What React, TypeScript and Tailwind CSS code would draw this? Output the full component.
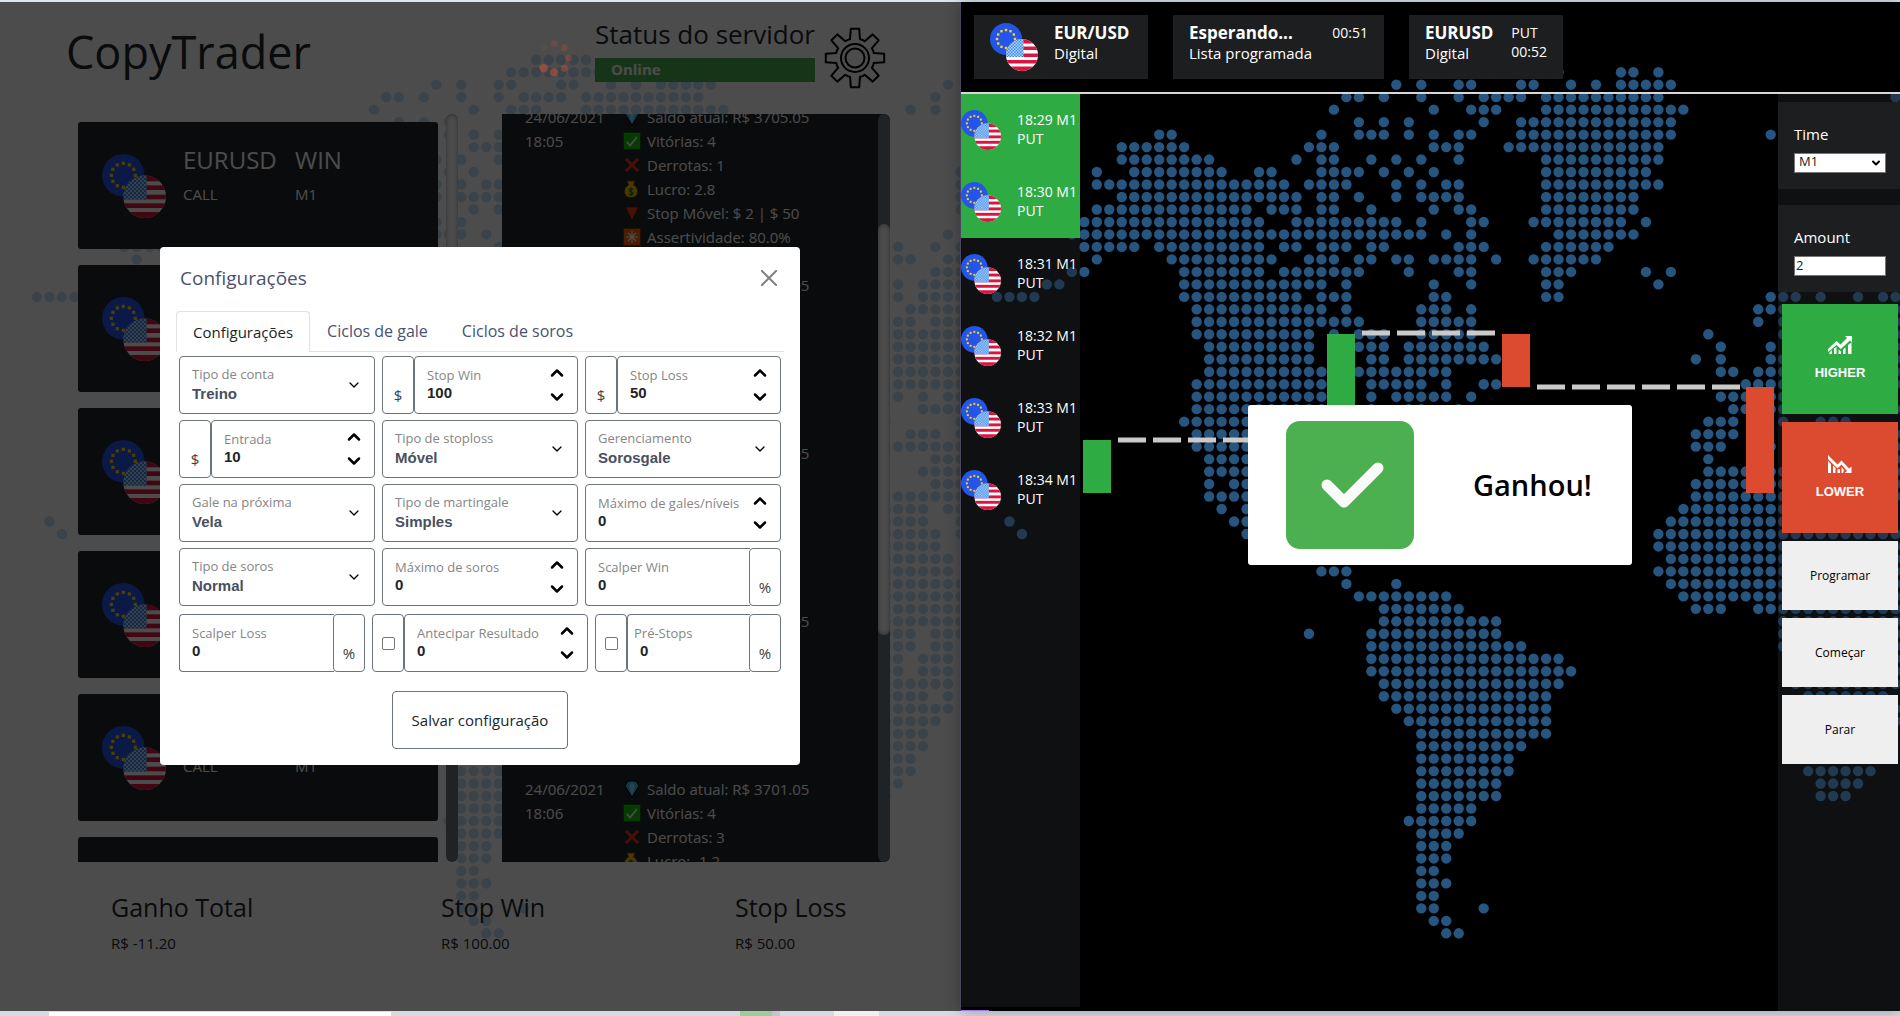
import { useState, type ReactNode } from "react";
import { ChevronDown, ChevronUp } from "lucide-react";

/* Occupied columns of the dotted world map, one entry per row starting at row 4. */
const MAP_ROWS = [
  "42-46",
  "40-47,52-53,55",
  "34,36,39-40,44-45,48,50,52-56,75",
  "30-31,33,36,39,41-44,46-55,74",
  "29,37,40-42,46-57,72,74",
  "31,33,35,41,44-56",
  "15-16,28,31-33,35,37,39-40,44-56,64",
  "12-17,27-29,37-39,43-55",
  "12-19,26,28-29,32,34,36,39,46-55",
  "10,13-20,23-24,28-31,33,35,37,46-54,76",
  "10-25,27-30,34,36,38-39,46-55,76",
  "12-26,28-29,31,34,36-39,46-53,76",
  "10-22,24-26,28-29,32,37,39-40,46-53,76",
  "9-23,26-34,36,40-41,45-52,54",
  "8-36,38,40,47-53,75",
  "9-13,15-23,25-26,28-30,32-33,39-41,46-51,71,74,76",
  "10,16-24,27-29,31-32,34-35,37-40,42,45-50,71-72,75-76",
  "8-9,17-23,25-31,35,39-40,46-48,54,56,74-76",
  "6-7,17-28,30,37,40,46-47,55,71,73-76",
  "2-5,17-26,28-30,37-38,46-47,64-66,68,71,73-76",
  "18-28,30,36-38,40,63-65,72-76",
  "18-31,36-40,63,65,71-72,74-76",
  "18-27,29,31-33,36-40,59,65,71-76",
  "19-27,31-33,35-41,60,64,71-76",
  "19-27,32-33,35-42,58,60,64-65,71-76",
  "19-28,31-38,60-61,63-65,71-76",
  "18-28,32-36,38,41-42,62-65,71-76",
  "18-28,32,34-38,40,60-65,71,73,75-76",
  "18-28,32,35-36,39,61-65,73-76",
  "17-28,59-61,65,68-70,76",
  "18-28,58-61,72-74,76",
  "18-28,58-60,64,71-76",
  "19-28,59,74-76",
  "19-28,59-65,73-76",
  "19,21-28,58-65,74-76",
  "19-28,58-65,71-76",
  "20,22-28,57-73,75-76",
  "3,21-28,56-73,76",
  "4,22-28,55-74,76",
  "24-30,55-74",
  "26-30,56-75",
  "28-30,55-75",
  "30,34,56-76",
  "31-38,57-76",
  "33-39,58-60,63-76",
  "33-42,65-76",
  "27,32-42,65-72,74-76",
  "32-44,65-72,74-75",
  "32-47,66-71,73-75",
  "32-48,66-71,73-75",
  "33-47,66-75",
  "33-46,67-73,75",
  "34-46,67-75",
  "35-46,67-74",
  "36-46,67-73",
  "36-44,67-73",
  "36-43,67-72",
  "36-43,67-72",
  "36-42,68-71",
  "36-42,68-70",
  "36-40",
  "35-40",
  "36-39",
  "36-38",
  "36-38",
  "36-37",
  "36-38",
  "36-37",
  "36-37,41",
  "37-38",
  "38-39",
];

const PITCH = 12.48;

const DOTS = MAP_ROWS.flatMap((row, i) =>
  row.split(",").flatMap((part) => {
    const [from, to = from] = part.split("-").map(Number);
    return Array.from({ length: to - from + 1 }, (_, k) => ({
      x: 12 + PITCH * (from + k),
      y: 9.8 + PITCH * (i + 4),
    }));
  }),
);

function WorldMap({ className, shift }: { className: string; shift: number }) {
  return (
    <svg
      className={`pointer-events-none absolute top-0 left-0 h-[1010px] w-[960px] ${className}`}
      viewBox={`${shift} 2 960 1010`}
      fill="currentColor"
      aria-hidden="true"
    >
      {DOTS.map((d) => (
        <circle key={`${d.x}-${d.y}`} cx={d.x} cy={d.y} r={5.2} />
      ))}
    </svg>
  );
}

function PairIcon({ className }: { className: string }) {
  return (
    <svg className={`shrink-0 ${className}`} viewBox="0 0 96 96" aria-hidden="true">
      <defs>
        <clipPath id="us-clip">
          <circle cx="64" cy="64" r="32" />
        </clipPath>
        <pattern id="us-stars" width="6" height="6" patternUnits="userSpaceOnUse">
          <rect width="6" height="6" fill="#3a8cf0" />
          <rect width="3" height="3" fill="#b9d6fa" />
          <rect x="3" y="3" width="3" height="3" fill="#b9d6fa" />
        </pattern>
      </defs>
      <circle cx="32" cy="32" r="32" fill="#2355ea" />
      {Array.from({ length: 12 }, (_, i) => {
        const a = (i * Math.PI) / 6;
        return (
          <rect
            key={i}
            x={32 + 18 * Math.sin(a) - 2.4}
            y={32 - 18 * Math.cos(a) - 2.4}
            width="4.8"
            height="4.8"
            fill="#ffd21a"
          />
        );
      })}
      <g clipPath="url(#us-clip)">
        <rect x="32" y="32" width="64" height="64" fill="#fff" />
        {[32, 47, 61, 74, 87].map((y, i) => (
          <rect key={y} x="32" y={y} width="64" height={i === 0 || i === 4 ? 9 : 7} fill="#dc143f" />
        ))}
        <rect x="32" y="32" width="35" height="36" fill="url(#us-stars)" />
      </g>
    </svg>
  );
}

const TEETH = Array.from({ length: 8 }, (_, i) => {
  const a = (i * Math.PI) / 4;
  return [
    [-5, -18.7],
    [-4.2, -29.2],
    [4.2, -29.2],
    [5, -18.7],
  ]
    .map(([x, y]) => `${(x * Math.cos(a) - y * Math.sin(a)).toFixed(2)},${(x * Math.sin(a) + y * Math.cos(a)).toFixed(2)}`)
    .join(" ");
});

/* Between two teeth the outline dips slightly towards the hub. */
const VALLEYS = Array.from({ length: 8 }, (_, i) => {
  const a = ((i + 0.5) * Math.PI) / 4;
  return `${(19.6 * Math.sin(a)).toFixed(2)},${(-19.6 * Math.cos(a)).toFixed(2)}`;
});

const GEAR_POINTS = TEETH.map((t, i) => `${t} ${VALLEYS[i]}`).join(" ");

function GearIcon() {
  return (
    <svg className="size-[62px]" viewBox="-31 -31 62 62" fill="none" stroke="#000" strokeWidth="2" strokeLinejoin="round" aria-hidden="true">
      <polygon points={GEAR_POINTS} />
      <circle r="14" />
      <circle r="9.5" />
    </svg>
  );
}

function LoadingDots() {
  const alpha = [0.35, 0.5, 0.6, 0.75, 0.9, 1, 0.04, 0.2];
  return (
    <svg className="relative z-10 size-9 opacity-50" viewBox="-18 -18 36 36" fill="#d9503a" aria-hidden="true">
      {alpha.map((o, i) => {
        const a = (i * Math.PI) / 4;
        return <circle key={i} cx={14.5 * Math.sin(a)} cy={-14.5 * Math.cos(a)} r={i > 3 && i < 6 ? 4.2 : 3.5} opacity={o} />;
      })}
    </svg>
  );
}

type Glyph = "gem" | "check" | "cross" | "bag" | "down" | "burst";

function LogIcon({ kind }: { kind: Glyph }) {
  return (
    <svg className="size-[18px] shrink-0" viewBox="0 0 18 18" aria-hidden="true">
      {kind === "gem" && (
        <>
          <path d="M5 1h8l3 5-7 11L2 6z" fill="#3db9ee" stroke="#000" />
          <path d="M9 2l3 4-3 10-3-10z" fill="#8fdcff" />
        </>
      )}
      {kind === "check" && (
        <>
          <rect x=".5" y=".5" width="17" height="17" fill="#16c60c" stroke="#0a5c05" />
          <path d="M4 10l3 3.5L14 5" fill="none" stroke="#fff" strokeWidth="1.6" />
        </>
      )}
      {kind === "cross" && <path d="M3 3l12 12M15 3L3 15" stroke="#f03a17" strokeWidth="3" />}
      {kind === "bag" && (
        <>
          <path d="M4 1h8l-1.500 4C14 7 14.500 9.500 14.500 11.500 14.500 15.500 12 17.500 8 17.500S1.500 15.500 1.500 11.500C1.500 9.500 2 7 5.500 5z" fill="#fcbf00" stroke="#5a4300" />
          <path d="M10 9.500C9 8.300 6 8.500 6 10.200s4 1.200 4 3-3 2-4.200.6M8 7.500v8.500" fill="none" stroke="#107c10" strokeWidth="1.300" />
        </>
      )}
      {kind === "down" && <path d="M2 3h14L9 16z" fill="#f03a17" stroke="#50120a" />}
      {kind === "burst" && (
        <>
          <rect x=".5" y=".5" width="17" height="17" fill="#f7630c" stroke="#7a2f05" />
          <path d="M9 3v12M3 9h12M5 5l8 8M13 5l-8 8" stroke="#fff" strokeWidth="1.100" />
        </>
      )}
    </svg>
  );
}

function Scrollbar({ thumb }: { thumb: string }) {
  return (
    <div className="flex w-3 shrink-0 flex-col overflow-hidden rounded-md bg-[#6c757d]">
      <div className={`rounded-md bg-white shadow-[inset_0_0_5px_#999] ${thumb}`} />
    </div>
  );
}

function OperationCard() {
  return (
    <li className="flex h-[127px] shrink-0 items-center gap-[17px] rounded-[3px] bg-[#212529] pl-6 text-white">
      <PairIcon className="size-16" />
      <div className="grid grid-cols-[112px_1fr] items-center pb-5">
        <span className="text-2xl leading-9">EURUSD</span>
        <span className="text-2xl leading-9">WIN</span>
        <span className="text-[15px] leading-8">CALL</span>
        <span className="text-[15px] leading-8">M1</span>
      </div>
    </li>
  );
}

type Report = { time: string; balance: string; wins: number; losses: number; profit: string; stop: string; rate: string };

const REPORTS: Report[] = [
  { time: "18:05", balance: "3705.05", wins: 4, losses: 1, profit: "2.8", stop: "2 | $ 50", rate: "80.0%" },
  { time: "18:05", balance: "3703.05", wins: 4, losses: 2, profit: "0.8", stop: "2 | $ 50", rate: "66.6%" },
  { time: "18:05", balance: "3703.05", wins: 4, losses: 2, profit: "0.8", stop: "2 | $ 50", rate: "66.6%" },
  { time: "18:06", balance: "3703.05", wins: 4, losses: 2, profit: "0.8", stop: "2 | $ 50", rate: "66.6%" },
  { time: "18:06", balance: "3701.05", wins: 4, losses: 3, profit: "-1.2", stop: "2 | $ 50", rate: "57.1%" },
];

function ReportItem({ r }: { r: Report }) {
  const lines: [Glyph, string][] = [
    ["gem", `Saldo atual: R$ ${r.balance}`],
    ["check", `Vitórias: ${r.wins}`],
    ["cross", `Derrotas: ${r.losses}`],
    ["bag", `Lucro: ${r.profit}`],
    ["down", `Stop Móvel: $ ${r.stop}`],
    ["burst", `Assertividade: ${r.rate}`],
  ];
  return (
    <li className="flex shrink-0 text-[15px] leading-6">
      <div className="w-[98px]">
        24/06/2021
        <br />
        {r.time}
      </div>
      <ul>
        {lines.map(([kind, text]) => (
          <li key={kind} className="flex items-center gap-1.5">
            <LogIcon kind={kind} />
            {text}
          </li>
        ))}
      </ul>
    </li>
  );
}

const BOX = "h-[58px] rounded-[4px] border border-[#6c757d] bg-white";

function Addon({ children, end, center }: { children: ReactNode; end?: boolean; center?: boolean }) {
  return (
    <div
      className={`flex w-8 shrink-0 justify-center text-[15px] text-[#3c4043] ${BOX} ${end ? "-ml-px" : ""} ${center ? "items-center" : "items-end pb-[7px]"}`}
    >
      {children}
    </div>
  );
}

function SelectField({ id, label, value }: { id: string; label: string; value: string }) {
  return (
    <div className={`flex min-w-0 flex-1 items-center pr-3 pl-3 ${BOX}`}>
      <div className="min-w-0 flex-1 pt-px">
        <label htmlFor={id} className="block text-[13px] leading-[18px] whitespace-nowrap text-[#868686]">
          {label}
        </label>
        <select
          id={id}
          className="block h-6 w-full appearance-none bg-transparent font-['Liberation_Sans',sans-serif] text-[15px] font-bold text-[#495060] outline-none"
        >
          <option>{value}</option>
        </select>
      </div>
      <ChevronDown className="pointer-events-none size-4 text-black" strokeWidth={2} aria-hidden="true" />
    </div>
  );
}

type NumberProps = { id: string; label: string; value: number; arrows?: boolean; open?: boolean; indent?: boolean };

function NumberField({ id, label, value, arrows = true, open, indent }: NumberProps) {
  const [n, setN] = useState(value);
  return (
    <div className={`flex min-w-0 flex-1 items-center pr-2 ${indent ? "pl-1.5" : "pl-3"} ${BOX} ${open ? "rounded-r-none border-r-0" : ""}`}>
      <div className="min-w-0 flex-1 pb-[3px]">
        <label htmlFor={id} className="block text-[13px] leading-5 whitespace-nowrap text-[#868686]">
          {label}
        </label>
        <input
          id={id}
          type="text"
          inputMode="numeric"
          value={n}
          onChange={(e) => setN(Number(e.target.value) || 0)}
          className={`block h-[18px] w-full bg-transparent font-['Liberation_Sans',sans-serif] text-[15px] font-bold text-[#212529] outline-none ${indent ? "pl-1.5" : ""}`}
        />
      </div>
      {arrows && (
        <div className="flex flex-col gap-1">
          <button type="button" aria-label={`Aumentar ${label}`} onClick={() => setN(n + 1)}>
            <ChevronUp className="h-5 w-6 text-black" strokeWidth={3} />
          </button>
          <button type="button" aria-label={`Diminuir ${label}`} onClick={() => setN(n - 1)}>
            <ChevronDown className="h-5 w-6 text-black" strokeWidth={3} />
          </button>
        </div>
      )}
    </div>
  );
}

function CheckAddon({ label }: { label: string }) {
  return (
    <Addon center>
      <input
        type="checkbox"
        aria-label={label}
        className="size-[13px] appearance-none rounded-[2px] border border-[#767676] bg-white checked:bg-blue-600"
      />
    </Addon>
  );
}

function SettingsDialog() {
  const tabs = ["Configurações", "Ciclos de gale", "Ciclos de soros"];
  return (
    <div className="absolute inset-x-0 top-[245px] flex justify-center pr-px">
      <div role="dialog" aria-label="Configurações" className="w-[640px] rounded-[4px] bg-white px-4 pb-4 text-[#495272]">
        <div className="flex h-16 items-center justify-between pr-[7px] pb-0.5 pl-1">
          <h2 className="text-[19px]">Configurações</h2>
          <button type="button" aria-label="Fechar" className="text-[#808080]">
            <svg className="size-4" viewBox="0 0 16 16" stroke="currentColor" strokeWidth="2" aria-hidden="true">
              <path d="M0 0l16 16M16 0L0 16" />
            </svg>
          </button>
        </div>
        <div role="tablist" className="flex h-[41px] border-b border-[#dee2e6]">
          {tabs.map((t, i) => (
            <button
              key={t}
              type="button"
              role="tab"
              aria-selected={i === 0}
              className={
                i === 0
                  ? "-mb-px rounded-t-[4px] border border-b-0 border-[#dee2e6] bg-white px-4 text-[15px] text-[#212529]"
                  : "px-[17px] text-base"
              }
            >
              {t}
            </button>
          ))}
        </div>
        <form className="flex flex-col gap-2 px-[3px] pt-1" onSubmit={(e) => e.preventDefault()}>
          <div className="grid grid-cols-3 gap-x-[7px] gap-y-1.5">
            <SelectField id="conta" label="Tipo de conta" value="Treino" />
            <div className="flex">
              <Addon>$</Addon>
              <NumberField id="stopwin" label="Stop Win" value={100} />
            </div>
            <div className="flex">
              <Addon>$</Addon>
              <NumberField id="stoploss" label="Stop Loss" value={50} />
            </div>
            <div className="flex">
              <Addon>$</Addon>
              <NumberField id="entrada" label="Entrada" value={10} />
            </div>
            <SelectField id="tipostop" label="Tipo de stoploss" value="Móvel" />
            <SelectField id="gerenciamento" label="Gerenciamento" value="Sorosgale" />
            <SelectField id="galeproxima" label="Gale na próxima" value="Vela" />
            <SelectField id="martingale" label="Tipo de martingale" value="Simples" />
            <NumberField id="maxgales" label="Máximo de gales/níveis" value={0} />
            <SelectField id="tiposoros" label="Tipo de soros" value="Normal" />
            <NumberField id="maxsoros" label="Máximo de soros" value={0} />
            <div className="flex">
              <NumberField id="scalperwin" label="Scalper Win" value={0} arrows={false} open />
              <Addon end>%</Addon>
            </div>
          </div>
          <div className="grid grid-cols-[186fr_216fr_186fr] gap-[7px]">
            <div className="flex">
              <NumberField id="scalperloss" label="Scalper Loss" value={0} arrows={false} open />
              <Addon end>%</Addon>
            </div>
            <div className="flex">
              <CheckAddon label="Ativar Antecipar Resultado" />
              <NumberField id="antecipar" label="Antecipar Resultado" value={0} />
            </div>
            <div className="flex">
              <CheckAddon label="Ativar Pré-Stops" />
              <NumberField id="prestops" label="Pré-Stops" value={0} arrows={false} open indent />
              <Addon end>%</Addon>
            </div>
          </div>
          <button type="submit" className={`mt-[11px] w-44 self-center text-[15px] text-[#212529] ${BOX}`}>
            Salvar configuração
          </button>
        </form>
      </div>
    </div>
  );
}

function CopyTraderWindow() {
  const totals = [
    ["Ganho Total", "R$ -11.20"],
    ["Stop Win", "R$ 100.00"],
    ["Stop Loss", "R$ 50.00"],
  ];
  return (
    <section className="relative min-w-0 flex-[961] overflow-hidden bg-white text-[#212529]">
      <WorldMap className="text-[#c4dff5]" shift={0} />
      <div className="relative flex h-full flex-col">
        <header className="flex h-28 items-start pl-[66px]">
          <h1 className="w-[470px] pt-[18px] text-[45px] leading-[64px]">CopyTrader</h1>
          <div className="pt-[38px]">
            <LoadingDots />
          </div>
          <div className="ml-[23px] w-[220px] pt-3">
            <p className="text-[26px] leading-10 whitespace-nowrap">Status do servidor</p>
            <p className="mt-1 h-6 bg-[#4caf50] pl-4 text-[15px] leading-[22px] font-bold text-white">Online</p>
          </div>
          <button type="button" aria-label="Abrir configurações" className="mt-[25px] ml-[9px]">
            <GearIcon />
          </button>
        </header>
        <div className="flex h-[748px] shrink-0 pr-[71px] pl-[78px]">
          <ul className="flex w-[360px] flex-col gap-4 overflow-hidden pt-2">
            {Array.from({ length: 6 }, (_, i) => (
              <OperationCard key={i} />
            ))}
          </ul>
          <div className="ml-2 flex">
            <Scrollbar thumb="h-[560px]" />
          </div>
          <div className="ml-11 flex min-w-0 flex-1 overflow-hidden rounded-r-[6px] bg-[#212529] text-white">
            <ul className="-mt-[9px] flex flex-1 flex-col gap-6 overflow-hidden pl-[23px]">
              {REPORTS.map((r, i) => (
                <ReportItem key={i} r={r} />
              ))}
            </ul>
            <div className="flex">
              <Scrollbar thumb="mt-[110px] h-[411px]" />
            </div>
          </div>
        </div>
        <footer className="grid grid-cols-[330fr_294fr_226fr] pt-[27px] pl-[111px]">
          {totals.map(([name, amount]) => (
            <div key={name}>
              <p className="text-[25px] leading-9">{name}</p>
              <p className="text-[15px] leading-9">{amount}</p>
            </div>
          ))}
        </footer>
      </div>
      <div className="absolute inset-0 bg-black/70" />
      <SettingsDialog />
    </section>
  );
}

function TrendIcon({ up }: { up: boolean }) {
  return (
    <svg className="h-5 w-6" viewBox="0 0 24 20" fill="#fff" aria-hidden="true">
      {up ? (
        <>
          <path d="M0 17v-3l8.500-8 4 3.500L19 3l-2-2h7v6.500L22 5.500 12.800 14 8.600 10z" />
          <path d="M1.500 17.500l2.500-2.500v4H1zM6 13.500l2.500-1.500v7H6zM10.500 14.500l2.500 2v2.500h-2.500zM15 14.500l2.500-2v6.500H15zM20 10l3.500-2.500V19H20z" />
        </>
      ) : (
        <>
          <path d="M0 1l9.500 9.500 4-4 7.500 8 2.500-2V19h-7l2.500-2-5.500-6.500-4 4L0 5z" />
          <path d="M0 7l3 3v9H0zM5 11.500l2.500 2.500v5H5zM9.500 15.500l2.500-.5v4H9.500zM13.500 13l2.500 3-1 3h-1.500z" />
        </>
      )}
    </svg>
  );
}

/* Candle positions on the price canvas. */
const CANDLES = [
  { x: 3, y: 346, h: 53, color: "#2eac43" },
  { x: 247, y: 240, h: 106, color: "#2eac43" },
  { x: 422, y: 240, h: 53, color: "#dc4a30" },
  { x: 666, y: 293, h: 106, color: "#dc4a30" },
];
const LEVELS = [
  { x1: 38, x2: 240, y: 346 },
  { x1: 282, x2: 415, y: 239 },
  { x1: 457, x2: 660, y: 293 },
];

function PriceChart() {
  return (
    <main className="relative min-w-0 flex-1">
      <svg className="absolute top-0 left-0 h-[500px] w-[698px]" viewBox="0 0 698 500" role="img" aria-label="Gráfico de velas">
        {LEVELS.map((l) => (
          <line key={l.x1} x1={l.x1} x2={l.x2} y1={l.y} y2={l.y} stroke="#cacaca" strokeWidth="5" strokeDasharray="28 7" />
        ))}
        {CANDLES.map((c) => (
          <rect key={c.x} x={c.x} y={c.y} width="28" height={c.h} fill={c.color} />
        ))}
      </svg>
      <div role="status" className="absolute top-[311px] left-[168px] flex h-40 w-96 items-center rounded-[3px] bg-white pl-[38px]">
        <svg className="size-32" viewBox="0 0 128 128" aria-hidden="true">
          <rect width="128" height="128" rx="14" fill="#4caf50" />
          <path d="M41 64l17 17L92 47" fill="none" stroke="#fafafa" strokeWidth="11" strokeLinecap="round" strokeLinejoin="round" />
        </svg>
        <p className="ml-[59px] text-[29px] font-semibold text-black">Ganhou!</p>
      </div>
    </main>
  );
}

function BrokerWindow() {
  const schedule = ["18:29", "18:30", "18:31", "18:32", "18:33", "18:34"];
  return (
    <section className="relative flex min-w-0 flex-[939] flex-col bg-black text-white shadow-[0_0_14px_rgba(0,0,0,0.3)]">
      <div className="absolute inset-0 overflow-hidden">
        <WorldMap className="text-[#265580]" shift={1} />
        <div className="absolute bottom-0 left-0 h-px w-7 bg-[#a67be8]" />
      </div>
      <div className="absolute inset-y-0 -left-px w-px bg-[#4a4660]" />
      <header className="relative flex h-[92px] items-start gap-[25px] border-b-2 border-[#d8d8d8] pt-[13px] pl-[13px]">
        <div className="flex h-16 w-[174px] bg-[#1c1e1f] pt-2 pl-4">
          <PairIcon className="size-12" />
          <div className="ml-4 leading-5">
            <p className="text-[17px] font-bold">EUR/USD</p>
            <p className="text-[15px]">Digital</p>
          </div>
        </div>
        <div className="flex h-16 w-[211px] justify-between bg-[#1c1e1f] px-4 pt-2 leading-5">
          <div>
            <p className="text-[17px] font-bold">Esperando...</p>
            <p className="text-[15px] whitespace-nowrap">Lista programada</p>
          </div>
          <p className="text-sm leading-5">00:51</p>
        </div>
        <div className="flex h-16 w-[154px] justify-between bg-[#1c1e1f] px-4 pt-2 leading-5">
          <div>
            <p className="text-[17px] font-bold">EURUSD</p>
            <p className="text-[15px]">Digital</p>
          </div>
          <p className="text-sm leading-[19px]">
            PUT
            <br />
            00:52
          </p>
        </div>
      </header>
      <div className="relative flex flex-1">
        <aside className="mb-1 w-[119px] bg-[#1c2023]/50">
          <ul>
            {schedule.map((t, i) => (
              <li key={t} className={`flex h-[72px] items-start pt-4 text-sm leading-[19px] font-medium ${i < 2 ? "bg-[#2eac43]" : ""}`}>
                <PairIcon className="size-10" />
                <span className="ml-4 whitespace-nowrap">
                  {t} M1
                  <br />
                  PUT
                </span>
              </li>
            ))}
          </ul>
        </aside>
        <PriceChart />
        <aside className="flex w-[122px] flex-col bg-[#1c2023]/50 pt-2">
          <div className="flex h-[87px] flex-col gap-2 bg-[#1c1e1f] px-4 pt-[22px]">
            <label htmlFor="time" className="text-[15px] leading-[21px] font-medium">
              Time
            </label>
            <div className="relative w-[92px]">
              <select
                id="time"
                className="block h-5 w-full appearance-none border border-[#767676] bg-white pb-1 pl-1 text-[13px] leading-[14px] text-[#222] outline-none"
              >
                <option>M1</option>
              </select>
              <ChevronDown className="pointer-events-none absolute top-1 right-1 size-3 text-black" strokeWidth={4} aria-hidden="true" />
            </div>
          </div>
          <div className="mt-4 flex h-[87px] flex-col gap-2 bg-[#1c1e1f] px-4 pt-[22px]">
            <label htmlFor="amount" className="text-[15px] leading-[21px] font-medium">
              Amount
            </label>
            <input
              id="amount"
              defaultValue="2"
              className="h-5 w-[92px] border border-[#767676] bg-white px-px pb-0.5 text-[13px] leading-4 text-[#222] outline-none"
            />
          </div>
          <div className="mt-3 flex flex-col gap-2 pr-0.5 pl-1">
            <button
              type="button"
              className="flex h-[110px] flex-col items-center justify-center gap-2 bg-[#2eac43] font-['Liberation_Sans',sans-serif] text-[13px] leading-5 font-bold"
            >
              <TrendIcon up />
              HIGHER
            </button>
            <button
              type="button"
              className="flex h-[111px] flex-col items-center justify-center gap-2 bg-[#dc4a30] font-['Liberation_Sans',sans-serif] text-[13px] leading-5 font-bold"
            >
              <TrendIcon up={false} />
              LOWER
            </button>
            {["Programar", "Começar", "Parar"].map((t) => (
              <button key={t} type="button" className="h-[69px] bg-[#efefef] text-xs text-black">
                {t}
              </button>
            ))}
          </div>
        </aside>
      </div>
    </section>
  );
}

export default function App() {
  return (
    <div className="flex h-screen flex-col overflow-hidden bg-[#dde4ec] pt-0.5 font-['Open_Sans',sans-serif]">
      <div className="flex min-h-0 flex-1">
        <CopyTraderWindow />
        <BrokerWindow />
      </div>
      <div className="flex h-[5px] shrink-0 bg-[#d9d9e3] pl-[49px]">
        <div className="mt-px w-[342px] bg-white" />
        <div className="ml-[349px] w-8 bg-[#9ccc9a]" />
        <div className="w-2 bg-[#c4c4cc]" />
        <div className="ml-[54px] w-[45px] bg-[#f0f0f3]" />
      </div>
    </div>
  );
}
